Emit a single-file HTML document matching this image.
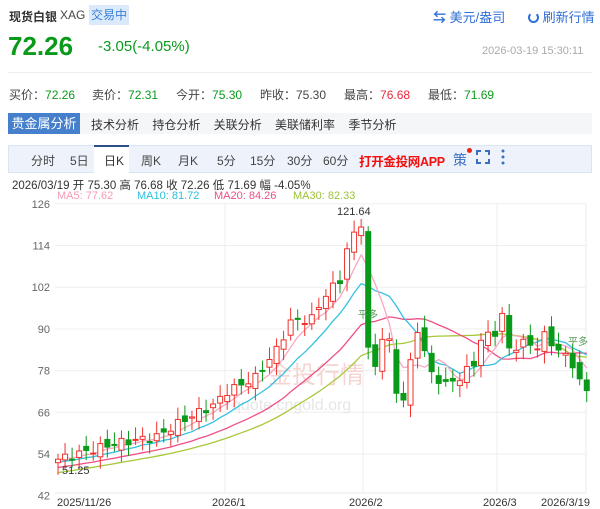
<!DOCTYPE html>
<html><head><meta charset="utf-8"><style>
*{margin:0;padding:0;box-sizing:border-box}
body{width:600px;height:509px;overflow:hidden;background:#fff;font-family:"Liberation Sans","Noto Sans CJK SC",sans-serif;color:#333;position:relative}
.a{position:absolute;white-space:nowrap}
</style></head><body>
<div class="a" style="left:9px;top:8px;font-size:12px;font-weight:bold;color:#333">现货白银</div>
<div class="a" style="left:60px;top:8px;font-size:12px;color:#444">XAG</div>
<div class="a" style="left:89px;top:5px;width:40px;height:20px;background:#dbeafa;color:#3b7fd8;font-size:12px;line-height:20px;text-align:center">交易中</div>
<div class="a" style="left:433px;top:7px;font-size:13px;color:#2f6fd6"><b>⇆</b> 美元/盎司</div>
<div class="a" style="top:7px;font-size:13px;color:#2f6fd6;left:528px"><span style="display:inline-block;width:11px;height:11px;border:2.5px solid #2f6fd6;border-radius:50%;border-top-color:transparent;vertical-align:-1px"></span> 刷新行情</div>
<div class="a" style="left:8px;top:31px;font-size:26px;font-weight:bold;color:#0a9a1a">72.26</div>
<div class="a" style="left:98px;top:38px;font-size:15px;color:#0a9a1a">-3.05(-4.05%)</div>
<div class="a" style="left:482px;top:45px;font-size:11px;color:#aaa">2026-03-19 15:30:11</div>
<div class="a" style="left:8px;top:72px;width:584px;height:1px;background:#eee"></div>
<div class="a" style="left:9px;top:86px;font-size:12px;color:#444">买价：<span style="color:#0a9a1a">72.26</span></div>
<div class="a" style="left:92px;top:86px;font-size:12px;color:#444">卖价：<span style="color:#0a9a1a">72.31</span></div>
<div class="a" style="left:176px;top:86px;font-size:12px;color:#444">今开：<span style="color:#0a9a1a">75.30</span></div>
<div class="a" style="left:260px;top:86px;font-size:12px;color:#444">昨收：75.30</div>
<div class="a" style="left:344px;top:86px;font-size:12px;color:#444">最高：<span style="color:#e8283a">76.68</span></div>
<div class="a" style="left:428px;top:86px;font-size:12px;color:#444">最低：<span style="color:#0a9a1a">71.69</span></div>
<div class="a" style="left:8px;top:113px;width:584px;height:21px;background:#f5f6f8"></div>
<div class="a" style="left:8px;top:113px;width:72px;height:21px;background:#4680cc;color:#fff;font-size:13px;line-height:21px;text-align:center">贵金属分析</div>
<div class="a" style="left:91px;top:116px;font-size:12px;color:#333;word-spacing:10px">技术分析 持仓分析 关联分析 美联储利率 季节分析</div>
<div class="a" style="left:8px;top:145px;width:584px;height:28px;background:#eef3fb;border:1px solid #dbe4f2"></div>
<div class="a" style="top:145px;width:35px;height:28px;background:#fff;border-top:2px solid #2d4f8a;left:94px"></div>
<div class="a" style="top:152px;font-size:12px;color:#444;left:31px">分时</div>
<div class="a" style="top:152px;font-size:12px;color:#444;left:70px">5日</div>
<div class="a" style="top:152px;font-size:12px;color:#333;left:104px">日K</div>
<div class="a" style="top:152px;font-size:12px;color:#444;left:141px">周K</div>
<div class="a" style="top:152px;font-size:12px;color:#444;left:178px">月K</div>
<div class="a" style="top:152px;font-size:12px;color:#444;left:217px">5分</div>
<div class="a" style="top:152px;font-size:12px;color:#444;left:250px">15分</div>
<div class="a" style="top:152px;font-size:12px;color:#444;left:287px">30分</div>
<div class="a" style="top:152px;font-size:12px;color:#444;left:323px">60分</div>
<div class="a" style="top:151px;font-size:12.5px;font-weight:bold;color:#f10f0f;left:359px;letter-spacing:-0.3px">打开金投网APP</div>
<div class="a" style="top:150px;font-size:14px;color:#3a6fc0;left:453px">策</div>
<div class="a" style="top:148px;left:467px;width:5px;height:5px;border-radius:50%;background:#e21"></div>
<svg class="a" style="left:476px;top:150px" width="14" height="14"><path d="M1 5V1H5M9 1H13V5M13 9V13H9M5 13H1V9" fill="none" stroke="#3a6fc0" stroke-width="2"/></svg>
<svg class="a" style="left:500px;top:149px" width="6" height="16"><circle cx="3" cy="2" r="1.5" fill="#3a6fc0"/><circle cx="3" cy="8" r="1.5" fill="#3a6fc0"/><circle cx="3" cy="14" r="1.5" fill="#3a6fc0"/></svg>
<div class="a" style="left:12px;top:177px;font-size:11.5px;color:#333">2026/03/19 开 75.30 高 76.68 收 72.26 低 71.69 幅 -4.05%</div>
<div class="a" style="left:57px;top:190px;font-size:11px;color:#f59bb4">MA5: 77.62</div>
<div class="a" style="left:137px;top:190px;font-size:11px;color:#2cc0de">MA10: 81.72</div>
<div class="a" style="left:214px;top:190px;font-size:11px;color:#ef4f86">MA20: 84.26</div>
<div class="a" style="left:293px;top:190px;font-size:11px;color:#9cc23a">MA30: 82.33</div>
<svg class="a" style="left:0;top:0" width="600" height="509" id="c"></svg>
<script>
var s='',Y=function(p){return 454-(p-54)*3.475};
[126,114,102,90,78,66,54,42].forEach(function(v){var y=Y(v);if(v>42)s+='<line x1="55" x2="586" y1="'+y+'" y2="'+y+'" stroke="#efefef"/>';s+='<text x="50" y="'+(y+4)+'" font-size="11" fill="#666" text-anchor="end" font-family="Liberation Sans">'+v+'</text>'});
s+='<line x1="55" x2="586" y1="493" y2="493" stroke="#e8e8e8"/>';
[225,363,497,586].forEach(function(x){s+='<line x1="'+x+'" x2="'+x+'" y1="204" y2="493" stroke="#eee"/>'});
s+='<text x="268" y="383" font-size="24" fill="#f5d5d2" font-family="Noto Sans CJK SC">金投行情</text><text x="232" y="410" font-size="16" fill="#e6e6e6" font-family="Liberation Sans">quote.cngold.org</text>';
var kp=[[0,52.5],[8,57],[14,59],[18,64],[22,68],[24,72],[28,76],[31,84],[33,92],[36,93],[38,100],[40,104],[41,113],[42,117],[43,120.5],[44,84],[45,79],[46,88],[47,86],[48,72],[49,70],[51,90],[53,77],[55,74],[57,76],[59,80],[60,87],[62,89],[63,94],[64,84],[66,86],[68,85],[69,88],[71,84],[72,82],[73,80],[74,75],[75,72.3]];
var c=[];for(var k=0;k<kp.length-1;k++){var a=kp[k],b=kp[k+1];for(var i=a[0];i<b[0];i++)c.push(a[1]+(b[1]-a[1])*(i-a[0])/(b[0]-a[0])+(Math.sin(i*2.3)*1.2))}c.push(72.26);
var pre=[];for(var i=0;i<30;i++)pre.push(44+i*0.3);var all=pre.concat(c);
function X(i){return 58+i*7.05}
function ma(n,col){var d='';for(var i=0;i<c.length;i++){var t=0;for(var j=0;j<n;j++)t+=all[30+i-j];d+=(i?'L':'M')+X(i)+' '+Y(t/n).toFixed(1)}s+='<path d="'+d+'" fill="none" stroke="'+col+'" stroke-width="1.3"/>'}
ma(30,'#a8c83a');ma(20,'#ef4f86');ma(10,'#35c1e0');ma(5,'#f7a8c0');
for(var i=0;i<c.length;i++){var o=i?c[i-1]+Math.cos(i*1.7)*1.5:51.5,cl=c[i];if(i==44)o=118;if(i==48)o=84;if(i==75)o=75.3;var up=cl>=o,col=up?'#f0312b':'#0a9a1a',hi=Math.max(o,cl)+1.5+Math.abs(Math.sin(i))*2,lo=Math.min(o,cl)-1.5-Math.abs(Math.cos(i))*2;if(i==43)hi=121.64;var x=X(i);
s+='<line x1="'+x+'" x2="'+x+'" y1="'+Y(hi)+'" y2="'+Y(lo)+'" stroke="'+col+'"/>';var t=Y(Math.max(o,cl)),h=Math.max(1,Y(Math.min(o,cl))-t);s+='<rect x="'+(x-2.5)+'" y="'+t+'" width="5" height="'+h+'" fill="'+(up?'#fff':col)+'" stroke="'+col+'"/>'}
s+='<text x="337" y="215" font-size="11" fill="#333" font-family="Liberation Sans">121.64</text><text x="62" y="474" font-size="11" fill="#333" font-family="Liberation Sans">51.25</text>';
s+='<text x="358" y="318" font-size="10" fill="#5a9a5a" font-family="Noto Sans CJK SC">平多</text><text x="568" y="345" font-size="10" fill="#5a9a5a" font-family="Noto Sans CJK SC">平多</text>';
[[57,'2025/11/26'],[212,'2026/1'],[349,'2026/2'],[483,'2026/3'],[541,'2026/3/19']].forEach(function(a){s+='<text x="'+a[0]+'" y="506" font-size="11" fill="#333" font-family="Liberation Sans">'+a[1]+'</text>'});
document.getElementById('c').innerHTML=s;
</script>
</body></html>
